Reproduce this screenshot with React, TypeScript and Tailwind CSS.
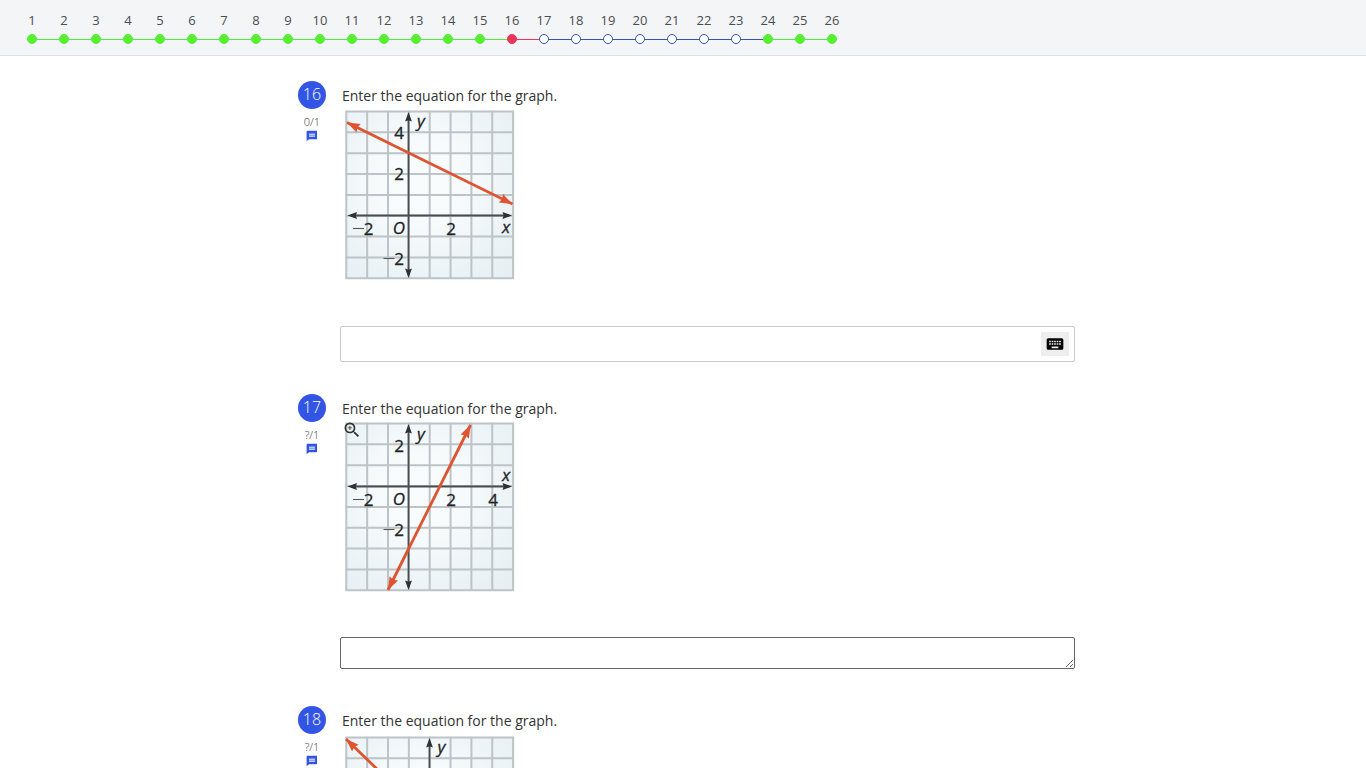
import { MdKeyboard, MdZoomIn } from "react-icons/md";

type Status = "correct" | "wrong" | "open";
type Point = [number, number];
type Label = { text: string; x: number; y: number; italic?: boolean; minus?: boolean };

type GraphData = {
  title: string;
  top: number;
  axisX: number;
  axisY: number;
  line: [Point, Point];
  labels: Label[];
};

type Question = {
  id: number;
  score: string;
  answer: "math" | "text";
  zoomable?: boolean;
  graph: GraphData;
};

const steps: { id: number; status: Status }[] = Array.from({ length: 26 }, (_, i) => {
  const id = i + 1;
  const status: Status = id === 16 ? "wrong" : id >= 17 && id <= 23 ? "open" : "correct";
  return { id, status };
});

const dotStyles: Record<Status, string> = {
  correct: "border-[#55ee33] bg-[#55ee33]",
  wrong: "border-[#ee3359] bg-[#ee3359]",
  open: "border-[#3355aa] bg-white",
};

const lineStyles: Record<Status, string> = {
  correct: "bg-[#55ee33]",
  wrong: "bg-[#ee3359]",
  open: "bg-[#3355aa]",
};

const questions: Question[] = [
  {
    id: 16,
    score: "0/1",
    answer: "math",
    graph: {
      title: "Line falling from upper left to right, crossing the y-axis at 3",
      top: 2.5,
      axisX: 64.5,
      axisY: 106.5,
      line: [[3, 13.5], [168.5, 95]],
      labels: [
        { text: "y", x: 77, y: 18, italic: true },
        { text: "4", x: 55, y: 30 },
        { text: "2", x: 55, y: 71 },
        { text: "2", x: 24.5, y: 126, minus: true },
        { text: "O", x: 55, y: 125, italic: true },
        { text: "2", x: 107, y: 126 },
        { text: "x", x: 162, y: 124, italic: true },
        { text: "2", x: 55, y: 156, minus: true },
      ],
    },
  },
  {
    id: 17,
    score: "?/1",
    answer: "text",
    zoomable: true,
    graph: {
      title: "Line rising steeply, crossing the y-axis at negative 3",
      top: 1.5,
      axisX: 64.5,
      axisY: 64.5,
      line: [[44, 168], [126.5, 3]],
      labels: [
        { text: "y", x: 77, y: 18, italic: true },
        { text: "2", x: 55, y: 30 },
        { text: "x", x: 162, y: 59, italic: true },
        { text: "2", x: 24.5, y: 84, minus: true },
        { text: "O", x: 55, y: 83, italic: true },
        { text: "2", x: 107, y: 84 },
        { text: "4", x: 149, y: 84 },
        { text: "2", x: 55, y: 114, minus: true },
      ],
    },
  },
  {
    id: 18,
    score: "?/1",
    answer: "text",
    zoomable: false,
    graph: {
      title: "Line falling from the upper left corner",
      top: 3.5,
      axisX: 85.5,
      axisY: 87,
      line: [[2, 5], [160, 158]],
      labels: [{ text: "y", x: 97.5, y: 19, italic: true }],
    },
  },
];

function Arrow({ at, angle, color, size }: { at: Point; angle: number; color: string; size: number }) {
  return (
    <path
      d={`M0 0L${-size} ${-size * 0.36}L${-size * 0.88} 0L${-size} ${size * 0.36}Z`}
      fill={color}
      transform={`translate(${at[0]} ${at[1]}) rotate(${angle})`}
    />
  );
}

function Graph({ id, data }: { id: number; data: GraphData }) {
  const { top, axisX, axisY, line, labels } = data;
  const [a, b] = line;
  const angle = (Math.atan2(b[1] - a[1], b[0] - a[0]) * 180) / Math.PI;
  const cells = Array.from({ length: 9 }, (_, i) => i * 20.85);
  return (
    <svg
      width="172"
      height="172"
      viewBox="0 0 172 172"
      role="img"
      aria-label={data.title}
      className="block overflow-visible"
    >
      <defs>
        <radialGradient id={`paper-${id}`} cx="0.45" cy="0.42" r="0.75">
          <stop offset="0.25" stopColor="#f9fcfd" />
          <stop offset="1" stopColor="#e6eff2" />
        </radialGradient>
      </defs>
      <rect x="2.5" y={top} width="167" height="167" fill={`url(#paper-${id})`} />
      <g stroke="#bcc4c8" strokeWidth="2">
        {cells.map((c) => (
          <path key={c} d={`M${2.3 + c} ${top - 0.8}v168.4M1.5 ${top + c}h168.4`} />
        ))}
      </g>
      <path
        d={`M${axisX} ${top + 4}V${top + 163}M7 ${axisY}H165`}
        stroke="#4a4d4f"
        strokeWidth="1.8"
      />
      <Arrow at={[axisX, top + 0.5]} angle={-90} color="#2f3234" size={9.5} />
      <Arrow at={[axisX, top + 166.5]} angle={90} color="#2f3234" size={9.5} />
      <Arrow at={[3.5, axisY]} angle={180} color="#2f3234" size={9.5} />
      <Arrow at={[168, axisY]} angle={0} color="#2f3234" size={9.5} />
      <line x1={a[0]} y1={a[1]} x2={b[0]} y2={b[1]} stroke="#df5330" strokeWidth="2.8" />
      <Arrow at={a} angle={angle + 180} color="#df5330" size={13} />
      <Arrow at={b} angle={angle} color="#df5330" size={13} />
      <g fontSize="17" fill="#222426" stroke="#222426" strokeWidth="0.3" textAnchor="middle">
        {labels.map((l, i) => (
          <g key={i}>
            <text x={l.x} y={l.y} fontStyle={l.italic ? "italic" : "normal"}>
              {l.text}
            </text>
            {l.minus ? (
              <path d={`M${l.x - 15.5} ${l.y - 6.5}h11`} stroke="#55595c" strokeWidth="1.1" />
            ) : null}
          </g>
        ))}
      </g>
    </svg>
  );
}

function MessageIcon() {
  return (
    <svg width="12" height="12" viewBox="0 0 12 12" aria-hidden="true">
      <path d="M1.2 .8h9.8v8.4H3L.6 11.2V1.4z" fill="#3355e6" />
      <path d="M3 3.6h6v3.2H3z" fill="#dfe5fb" />
      <path d="M3 5.2h6" stroke="#6f88ee" strokeWidth="1" />
    </svg>
  );
}

function StepNav() {
  return (
    <header className="h-14 shrink-0 border-b border-[#dfe1e3] bg-[#f3f5f7] px-4 pt-[11px]">
      <nav aria-label="Questions">
        <ol className="flex">
          {steps.map(({ id, status }, i) => (
            <li key={id} className="w-8 shrink-0">
              <a href={`#question-${id}`} className="flex flex-col items-center gap-[5px] text-[13px] leading-[18px] text-[#4a4d52]">
                <span>{id}</span>
                <span className="flex w-full items-center">
                  <span className={`h-px flex-1 ${i > 0 ? lineStyles[steps[i - 1].status] : ""}`} />
                  <span className={`size-[10px] rounded-full border ${dotStyles[status]}`} />
                  <span className={`h-px flex-1 ${i < steps.length - 1 ? lineStyles[status] : ""}`} />
                </span>
              </a>
            </li>
          ))}
        </ol>
      </nav>
    </header>
  );
}

function QuestionBlock({ question }: { question: Question }) {
  const { id, score, answer, zoomable, graph } = question;
  return (
    <section id={`question-${id}`} className="flex gap-[14px]">
      <div className="flex w-7 shrink-0 flex-col items-center">
        <span className="flex size-7 items-center justify-center rounded-full bg-[#3355e6] pb-0.5 text-base font-light text-white">
          {id}
        </span>
        <span className="mt-1.5 text-[11px] leading-[14px] font-light text-[#333]">{score}</span>
        <button type="button" aria-label={`Comments on question ${id}`} className="mt-px">
          <MessageIcon />
        </button>
      </div>
      <div className="min-w-0 flex-1">
        <label htmlFor={`answer-${id}`} className="block pt-[3px] pb-px pl-0.5 text-sm leading-6 text-[#333]">
          Enter the equation for the graph.
        </label>
        <div className="relative ml-1 w-[172px]">
          <Graph id={id} data={graph} />
          {zoomable ? (
            <button type="button" aria-label="Enlarge graph" className="absolute -top-0.5 -left-0.5 text-[#333]">
              <MdZoomIn size={20} />
            </button>
          ) : null}
        </div>
        {answer === "math" ? (
          <div className="mt-[45px] mb-8 flex h-9 items-center rounded-xs border border-[#c8c8c8] pr-[5px]">
            <input
              id={`answer-${id}`}
              type="text"
              className="h-full min-w-0 flex-1 px-2 text-sm outline-none"
            />
            <button
              type="button"
              aria-label="Open keyboard"
              className="flex h-6 w-7 items-center justify-center bg-[#eeeeee] text-black"
            >
              <MdKeyboard size={20} />
            </button>
          </div>
        ) : (
          <textarea
            id={`answer-${id}`}
            rows={1}
            className="mt-[43px] mb-[37px] block h-8 w-full rounded-xs border border-[#666] px-2 py-1 text-sm outline-none"
          />
        )}
      </div>
    </section>
  );
}

export default function App() {
  return (
    <div className="flex h-screen flex-col bg-white font-['Open_Sans','Noto_Sans',sans-serif]">
      <StepNav />
      <main className="min-h-0 flex-1 overflow-y-auto [scrollbar-width:none]">
        <div className="mx-auto max-w-[784px] pt-[25px] pl-[7px]">
          {questions.map((q) => (
            <QuestionBlock key={q.id} question={q} />
          ))}
        </div>
      </main>
    </div>
  );
}
